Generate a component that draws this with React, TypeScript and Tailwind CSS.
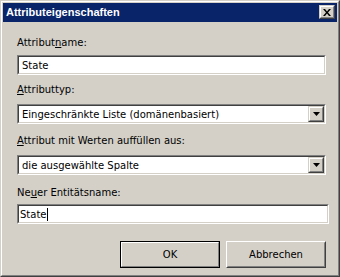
import React from "react";

const font = { fontFamily: '"DejaVu Sans", Verdana, sans-serif' };
const titleFont = { fontFamily: '"Liberation Sans", Arial, sans-serif' };

function Sunken({ children, className = "" }: { children: React.ReactNode; className?: string }) {
  return (
    <div className={"h-[20px] border border-t-[#808080] border-l-[#808080] border-r-white border-b-white " + className}>
      <div className="h-full border border-t-[#404040] border-l-[#404040] border-r-[#d4d0c8] border-b-[#d4d0c8] bg-white flex items-center">
        {children}
      </div>
    </div>
  );
}

function DropButton() {
  return (
    <div className="ml-auto w-[16px] h-[16px] border border-t-[#d4d0c8] border-l-[#d4d0c8] border-r-[#404040] border-b-[#404040]">
      <div className="h-full border border-t-white border-l-white border-r-[#808080] border-b-[#808080] bg-[#d4d0c8] flex items-center justify-center">
        <svg width="7" height="4" viewBox="0 0 7 4" className="block">
          <path d="M0 0h7L3.5 4z" fill="#000" />
        </svg>
      </div>
    </div>
  );
}

export default function App() {
  return (
    <div
      className="w-[340px] h-[277px] border border-t-[#d4d0c8] border-l-[#d4d0c8] border-r-[#404040] border-b-[#404040] bg-[#d4d0c8] text-black text-[10px] leading-[13px]"
      style={font}
    >
      <div className="h-full border border-t-white border-l-white border-r-[#808080] border-b-[#808080] p-px flex flex-col">
        <div className="h-[19px] bg-[#0a246a] flex items-start pl-[3px] pr-[2px]">
          <span className="text-white font-bold text-[11px] leading-[13px] mt-[3px]" style={titleFont}>
            Attributeigenschaften
          </span>
          <div className="ml-auto mt-[2px] w-[16px] h-[14px] border border-t-[#d4d0c8] border-l-[#d4d0c8] border-r-[#404040] border-b-[#404040]">
            <div className="h-full border border-t-white border-l-white border-r-[#808080] border-b-[#808080] bg-[#d4d0c8] flex items-center justify-center">
              <svg width="8" height="7" viewBox="0 0 8 7" className="block">
                <path d="M0 0h2l2 2.5L6 0h2L5 3.5 8 7H6L4 4.5 2 7H0l3-3.5z" fill="#000" />
              </svg>
            </div>
          </div>
        </div>
        <div className="flex-1 flex flex-col pl-[14px] pr-[11px] pt-[14px]">
          <div>
            Attribut<u>n</u>ame:
          </div>
          <Sunken className="mt-[6px]">
            <span className="pl-[3px]">State</span>
          </Sunken>
          <div className="mt-[8px]">
            <u>A</u>ttributtyp:
          </div>
          <Sunken className="mt-[8px]">
            <span className="pl-[3px]">Eingeschränkte Liste (domänenbasiert)</span>
            <DropButton />
          </Sunken>
          <div className="mt-[10px]">
            <u>A</u>ttribut mit Werten auffüllen aus:
          </div>
          <Sunken className="mt-[8px]">
            <span className="pl-[3px]">die ausgewählte Spalte</span>
            <DropButton />
          </Sunken>
          <div className="mt-[11px]">
            Ne<u>u</u>er Entitätsname:
          </div>
          <Sunken className="mt-[5px] -mr-[3px]">
            <span className="pl-px">State</span>
            <span className="w-px h-[13px] bg-black ml-px" />
          </Sunken>
          <div className="mt-[17px] flex justify-end gap-[6px]">
            <div className="w-[100px] h-[27px] border border-black">
              <div className="h-full border border-t-white border-l-white border-r-[#808080] border-b-[#808080] flex items-center justify-center">
                OK
              </div>
            </div>
            <div className="w-[100px] h-[27px] border border-t-white border-l-white border-r-[#404040] border-b-[#404040]">
              <div className="h-full border border-t-[#d4d0c8] border-l-[#d4d0c8] border-r-[#808080] border-b-[#808080] flex items-center justify-center">
                Abbrechen
              </div>
            </div>
          </div>
        </div>
      </div>
    </div>
  );
}
